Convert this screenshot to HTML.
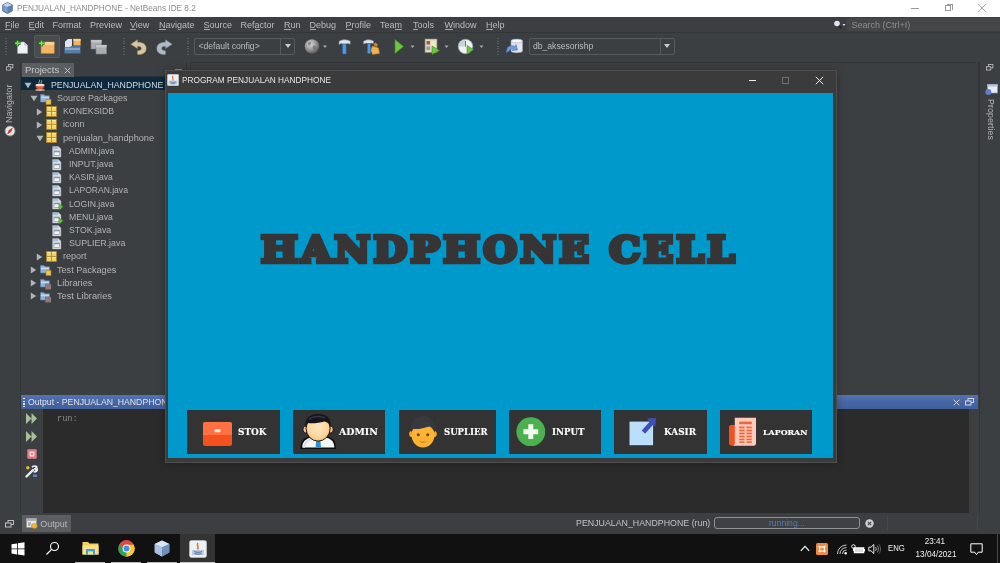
<!DOCTYPE html>
<html><head><meta charset="utf-8"><title>PENJUALAN_HANDPHONE - NetBeans IDE 8.2</title>
<style>
*{box-sizing:border-box;margin:0;padding:0}
html,body{width:1000px;height:563px;overflow:hidden;background:#3c3f41}
body{position:relative;font-family:"Liberation Sans",sans-serif;font-size:8.8px;color:#bbbbbb;line-height:1}
#w{position:absolute;left:0;top:0;width:1000px;height:563px;overflow:hidden;will-change:transform}
.a{position:absolute}
.t{position:absolute;white-space:nowrap}
#titlebar{left:0;top:0;width:1000px;height:17px;background:#fff}
#menubar{left:0;top:17px;width:1000px;height:15px;background:#3c3f41}
#menubar span{position:absolute;top:3.8px;font-size:9px;color:#bbbbbb;white-space:nowrap}
#menubar u{text-decoration:underline;text-underline-offset:1px}
#toolbar{left:0;top:32px;width:1000px;height:30px;background:#3c3f41;border-top:1px solid #333638}
.combo{position:absolute;border:1px solid #555a5c;border-radius:2px;background:#3c3f41;color:#bbb;font-size:8.6px}
.combo .arr{position:absolute;right:0;top:0;bottom:0;width:14px;border-left:1px solid #555a5c}
.combo .arr:after{content:"";position:absolute;left:3.5px;top:5.5px;border:3px solid transparent;border-top:4px solid #ccc;border-bottom:0}
.row{position:absolute;left:21px;width:143px;height:13.2px}
.row span{position:absolute;top:2.2px;font-size:8.9px;color:#b2b2b2;white-space:nowrap}
.bl{font-family:'DejaVu Serif','Liberation Serif',serif;font-weight:bold;font-size:9.6px;color:#fff;transform-origin:0 0;-webkit-text-stroke:0.15px #fff}
</style></head>
<body>
<div id="w">
<!-- TITLE BAR -->
<div class="a" id="titlebar">
  <svg class="a" style="left:2.3px;top:2px" width="11" height="12" viewBox="0 0 11 12"><path d="M5.5 0.5 L10.3 2.8 L10.3 9 L5.5 11.6 L0.7 9 L0.7 2.8Z" fill="#7f9cc4" stroke="#3f5f8f" stroke-width="0.8"/><path d="M0.9 2.9 L5.5 5 L10.1 2.9 L5.5 0.8Z" fill="#c6d6ea"/><path d="M5.5 5 L5.5 11.3 L10.1 8.9 L10.1 2.9Z" fill="#5f7fae"/></svg>
  <div class="t" style="left:17px;top:3.6px;font-size:9.3px;color:#8c8c8c;transform-origin:0 0;transform:scaleX(0.885)">PENJUALAN_HANDPHONE - NetBeans IDE 8.2</div>
  <div class="a" style="left:911px;top:7.5px;width:8px;height:1px;background:#999"></div>
  <div class="a" style="left:944.5px;top:5px;width:6px;height:6px;border:1px solid #999"></div>
  <div class="a" style="left:946.5px;top:3.5px;width:6px;height:6px;border:1px solid #999;border-left:0;border-bottom:0"></div>
  <svg class="a" style="left:977px;top:3px" width="10" height="10" viewBox="0 0 10 10"><path d="M1 1 L9 9 M9 1 L1 9" stroke="#999" stroke-width="0.9" fill="none"/></svg>
</div>
<!-- MENU BAR -->
<div class="a" id="menubar">
  <span style="left:5px">File</span>
  <span style="left:28.5px">Edit</span>
  <span style="left:52.5px">Format</span>
  <span style="left:90px">Preview</span>
  <span style="left:130px">View</span>
  <span style="left:159px">Navigate</span>
  <span style="left:203.5px">Source</span>
  <span style="left:240.5px">Refactor</span>
  <span style="left:284px">Run</span>
  <span style="left:309.5px">Debug</span>
  <span style="left:345.5px">Profile</span>
  <span style="left:380px">Team</span>
  <span style="left:413px">Tools</span>
  <span style="left:444.5px">Window</span>
  <span style="left:486px">Help</span>
  <div class="a" style="left:5.0px;top:12.4px;width:5.5px;height:0.8px;background:#a8a8a8"></div>
  <div class="a" style="left:28.5px;top:12.4px;width:6.0px;height:0.8px;background:#a8a8a8"></div>
  <div class="a" style="left:130.0px;top:12.4px;width:5.8px;height:0.8px;background:#a8a8a8"></div>
  <div class="a" style="left:159.0px;top:12.4px;width:6.5px;height:0.8px;background:#a8a8a8"></div>
  <div class="a" style="left:203.5px;top:12.4px;width:6.0px;height:0.8px;background:#a8a8a8"></div>
  <div class="a" style="left:254.5px;top:12.4px;width:5.0px;height:0.8px;background:#a8a8a8"></div>
  <div class="a" style="left:284.0px;top:12.4px;width:6.5px;height:0.8px;background:#a8a8a8"></div>
  <div class="a" style="left:309.5px;top:12.4px;width:6.5px;height:0.8px;background:#a8a8a8"></div>
  <div class="a" style="left:345.5px;top:12.4px;width:6.0px;height:0.8px;background:#a8a8a8"></div>
  <div class="a" style="left:394.5px;top:12.4px;width:7.5px;height:0.8px;background:#a8a8a8"></div>
  <div class="a" style="left:413.0px;top:12.4px;width:4.5px;height:0.8px;background:#a8a8a8"></div>
  <div class="a" style="left:444.5px;top:12.4px;width:8.5px;height:0.8px;background:#a8a8a8"></div>
  <div class="a" style="left:486.0px;top:12.4px;width:6.5px;height:0.8px;background:#a8a8a8"></div>
  <div class="a" style="left:847px;top:1px;width:153px;height:13px;background:#434748"></div>
  <span style="left:851.5px;color:#8f8f8f">Search (Ctrl+I)</span>
  <svg class="a" style="left:832px;top:2px" width="16" height="12" viewBox="0 0 16 12"><circle cx="5" cy="4.5" r="2.8" fill="#dfe6ee"/><path d="M7 6.8 L9.5 9.5" stroke="#222" stroke-width="1.6"/><path d="M10.5 5 L13.5 5 L12 7Z" fill="#ddd"/></svg>
</div>
<!-- TOOLBAR -->
<div class="a" id="toolbar"></div>
<!-- placeholder sections follow -->
<!-- toolbar icons -->
<div class="a" id="tbicons" style="left:0;top:32px;width:1000px;height:30px">
  <!-- grip -->
  <div class="a" style="left:5px;top:6px;width:2px;height:18px;background:repeating-linear-gradient(#5a5e60 0 1px,transparent 1px 2.6px)"></div>
  <!-- new file -->
  <svg class="a" style="left:13.6px;top:6.6px" width="15" height="15.6" viewBox="0 0 17 17"><path d="M4 3 L11.5 3 L15.5 7 L15.5 16 L4 16Z" fill="#eef1f6" stroke="#9aa3b0" stroke-width="0.6"/><path d="M11.5 3 L11.5 7 L15.5 7Z" fill="#c2c9d4"/><path d="M4 1 L4 8 M0.5 4.5 L7.5 4.5" stroke="#1c6b12" stroke-width="3.2"/><path d="M4 1.6 L4 7.4 M1.1 4.5 L6.9 4.5" stroke="#7fe05a" stroke-width="1.6"/></svg>
  <!-- new project (hover) -->
  <div class="a" style="left:34.4px;top:3px;width:25.4px;height:23px;background:#484c4e;border:1px solid #565a5c;border-radius:2px"></div>
  <svg class="a" style="left:37.6px;top:6.6px" width="17.5" height="15.6" viewBox="0 0 20 17"><rect x="3.5" y="3" width="15" height="13" fill="#f3b463" stroke="#c98a3a" stroke-width="0.6"/><rect x="3.5" y="3" width="15" height="3.4" fill="#f8cf8f"/><path d="M4 1 L4 8 M0.5 4.5 L7.5 4.5" stroke="#1c6b12" stroke-width="3.2"/><path d="M4 1.6 L4 7.4 M1.1 4.5 L6.9 4.5" stroke="#7fe05a" stroke-width="1.6"/></svg>
  <!-- open project -->
  <svg class="a" style="left:64px;top:6px" width="18" height="17" viewBox="0 0 18 17"><path d="M1 3.5 L4 1 L8 1 L8 12 L1 12Z" fill="#dfe5ee"/><rect x="9.5" y="1" width="7" height="6.5" fill="#f3b463" stroke="#c98a3a" stroke-width="0.5"/><rect x="9.5" y="1" width="7" height="2" fill="#f8cf8f"/><path d="M0.5 9.5 L6 9.5 L7.5 8 L16.5 8 L16.5 15.5 L0.5 15.5Z" fill="#5b7ea6" stroke="#3d5b80" stroke-width="0.5"/><rect x="1" y="10" width="15" height="2" fill="#86a6c9"/></svg>
  <!-- close/all -->
  <svg class="a" style="left:90px;top:7px" width="18" height="16" viewBox="0 0 18 16"><rect x="1" y="1" width="10.5" height="9" fill="#a9adb0" stroke="#7b7f82" stroke-width="0.6"/><rect x="1" y="1" width="10.5" height="2.4" fill="#c3c6c9"/><rect x="6" y="6" width="10.5" height="9" fill="#a9adb0" stroke="#7b7f82" stroke-width="0.6"/><rect x="6" y="6" width="10.5" height="2.4" fill="#c3c6c9"/></svg>
  <!-- grip -->
  <div class="a" style="left:122.5px;top:6px;width:2px;height:18px;background:repeating-linear-gradient(#5a5e60 0 1px,transparent 1px 2.6px)"></div>
  <!-- undo -->
  <svg class="a" style="left:129.5px;top:6.5px" width="17" height="16" viewBox="0 0 17 16"><path d="M7.5 0.8 L0.8 5.2 L7.5 9.6 L7.5 7.2 C10.2 7 11.4 8 11.3 9.6 C11.2 11.2 9.8 11.8 7.5 11.7 L7.5 15.6 C12.8 15.8 16.2 13.6 16.2 9.4 C16.2 5.2 12.6 3 7.5 3.2Z" fill="#d9c5a2" stroke="#a08a64" stroke-width="0.5"/></svg>
  <!-- redo -->
  <svg class="a" style="left:155.5px;top:6.5px" width="17" height="16" viewBox="0 0 17 16"><g transform="translate(17,0) scale(-1,1)"><path d="M7.5 0.8 L0.8 5.2 L7.5 9.6 L7.5 7.2 C10.2 7 11.4 8 11.3 9.6 C11.2 11.2 9.8 11.8 7.5 11.7 L7.5 15.6 C12.8 15.8 16.2 13.6 16.2 9.4 C16.2 5.2 12.6 3 7.5 3.2Z" fill="#aebbc7" stroke="#7a8793" stroke-width="0.5"/></g></svg>
  <div class="a" style="left:187px;top:6px;width:2px;height:18px;background:repeating-linear-gradient(#5a5e60 0 1px,transparent 1px 2.6px)"></div>
  <!-- combo -->
  <div class="combo" style="left:194px;top:5.5px;width:101px;height:17px"><span class="t" style="left:3.5px;top:3.2px">&lt;default config&gt;</span><div class="arr"></div></div>
  <!-- globe -->
  <svg class="a" style="left:304px;top:6px" width="24" height="17" viewBox="0 0 24 17"><defs><radialGradient id="gl" cx="0.4" cy="0.35" r="0.7"><stop offset="0" stop-color="#d9d9d9"/><stop offset="0.6" stop-color="#8d8d8d"/><stop offset="1" stop-color="#4d4d4d"/></radialGradient></defs><circle cx="8" cy="8.5" r="7.3" fill="url(#gl)"/><path d="M4 5 C6 3 8 4 7 6 C6 8 4 8 4 5Z M9 8 C12 7 13 9 12 11 C10 13 8 11 9 8Z" fill="#6d6d6d" opacity="0.7"/><path d="M19 7.5 L23 7.5 L21 10Z" fill="#a8a8a8"/></svg>
  <!-- hammer -->
  <svg class="a" style="left:336px;top:6px" width="17" height="17" viewBox="0 0 17 17"><path d="M3 3.6 C5 1.4 10.5 1.2 14.2 3.2 L14.2 6.2 L11 5.2 L10.2 6.2 L6.6 6.2 L5.8 5.2 L3 6.4Z" fill="#dfe5ec" stroke="#7e8b99" stroke-width="0.6"/><path d="M6.7 6 L10 6 L10.3 15.5 C9.5 16.3 7.3 16.3 6.4 15.5Z" fill="#4f9be0" stroke="#2a66a6" stroke-width="0.6"/></svg>
  <!-- clean & build -->
  <svg class="a" style="left:362px;top:6px" width="19" height="17" viewBox="0 0 19 17"><path d="M1.5 3.6 C3.5 1.4 8.5 1.2 11.5 3.2 L11.5 5.6 L9 4.9 L8.5 5.6 L5.5 5.6 L4.8 4.9 L1.5 6Z" fill="#dfe5ec" stroke="#7e8b99" stroke-width="0.6"/><path d="M5.6 5.6 L8.4 5.6 L8.7 15 C8 15.8 6.2 15.8 5.4 15Z" fill="#4f9be0" stroke="#2a66a6" stroke-width="0.6"/><path d="M13 4.5 L16 6.5 L14.5 9 L11.5 7Z" fill="#c9872e"/><path d="M10.5 8 L16.5 10 L17.5 15.5 L10.5 16.5 L8.8 12Z" fill="#f0b154" stroke="#b77a22" stroke-width="0.6"/></svg>
  <!-- run -->
  <svg class="a" style="left:392px;top:6px" width="26" height="17" viewBox="0 0 26 17"><path d="M3 1.5 L11.5 8.5 L3 15.5Z" fill="#6cc644" stroke="#3d8f1f" stroke-width="0.6"/><path d="M18.5 7.5 L22.5 7.5 L20.5 10Z" fill="#a8a8a8"/></svg>
  <!-- debug -->
  <svg class="a" style="left:424px;top:6px" width="30" height="17" viewBox="0 0 30 17"><rect x="1" y="1" width="12" height="13.5" fill="#ddd9c8" stroke="#8b8876" stroke-width="0.6"/><rect x="2.5" y="3" width="3.5" height="3.5" fill="#c0503a"/><rect x="2.5" y="8.5" width="3.5" height="3.5" fill="#9a9a9a"/><rect x="7.5" y="3" width="4" height="9" fill="#f2e8c4"/><path d="M8 8 L15.5 12.5 L8 16.5Z" fill="#6cc644" stroke="#3d8f1f" stroke-width="0.6"/><path d="M20.5 7.5 L24.5 7.5 L22.5 10Z" fill="#a8a8a8"/></svg>
  <!-- profile -->
  <svg class="a" style="left:457px;top:6px" width="30" height="17" viewBox="0 0 30 17"><circle cx="8.5" cy="8.5" r="7.3" fill="#eef2f5" stroke="#8b979f" stroke-width="0.7"/><path d="M8.5 8.5 L8.5 1.8 A6.7 6.7 0 0 0 1.8 8.5Z" fill="#c9d3da"/><path d="M8.5 3 L8.5 8.5" stroke="#b33" stroke-width="0.8"/><path d="M10 7.5 L16.5 11.5 L10 15.8Z" fill="#6cc644" stroke="#3d8f1f" stroke-width="0.6"/><path d="M22.5 7.5 L26.5 7.5 L24.5 10Z" fill="#a8a8a8"/></svg>
  <!-- grip -->
  <div class="a" style="left:497px;top:6px;width:2px;height:18px;background:repeating-linear-gradient(#5a5e60 0 1px,transparent 1px 2.6px)"></div>
  <!-- db icon -->
  <svg class="a" style="left:505px;top:6px" width="19" height="17" viewBox="0 0 19 17"><path d="M6 3 C6 0.8 17.5 0.8 17.5 3 L17.5 13 C17.5 15.3 6 15.3 6 13Z" fill="#e3e7ec" stroke="#9aa3ad" stroke-width="0.6"/><ellipse cx="11.75" cy="3" rx="5.75" ry="1.8" fill="#f6f8fa" stroke="#9aa3ad" stroke-width="0.5"/><path d="M1 14.5 L2.5 9.5 C4 7.5 8 7 10 8.5 L11 6.5 L12.5 12 L7 12.5 L8.3 11 C6.5 10.5 4.5 11.5 3.8 13.5Z" fill="#6d9be0" stroke="#3d66ad" stroke-width="0.5"/></svg>
  <div class="combo" style="left:528.5px;top:5.5px;width:146px;height:17px"><span class="t" style="left:3.5px;top:3.2px">db_aksesorishp</span><div class="arr"></div></div>
</div>
<!-- MAIN AREA -->
<div class="a" style="left:0;top:62px;width:1000px;height:451px;background:#3c3f41"></div>
<!-- left side bar -->
<svg class="a" style="left:5.8px;top:64px" width="8" height="7" viewBox="0 0 11 9"><rect x="3.5" y="0.5" width="6" height="4.5" fill="none" stroke="#ccc" stroke-width="1"/><rect x="0.5" y="3.5" width="6" height="4.5" fill="#3c3f41" stroke="#ccc" stroke-width="1"/></svg>
<div class="t" style="left:5.2px;top:123px;font-size:8.8px;color:#b4b4b4;transform:rotate(-90deg);transform-origin:0 0;letter-spacing:0.1px">Navigator</div>
<svg class="a" style="left:4px;top:125px" width="12" height="12" viewBox="0 0 12 12"><circle cx="6" cy="6" r="5" fill="#e8e8e8" stroke="#888" stroke-width="0.8"/><path d="M6 1.5 L7.5 6 L6 10.5 L4.5 6Z" fill="#c33" transform="rotate(40 6 6)"/></svg>
<!-- projects panel -->
<div class="a" style="left:20px;top:62px;width:1px;height:451px;background:#323537"></div>
<div class="a" style="left:21px;top:62px;width:165px;height:15px;background:#3c3f41;border-bottom:1px solid #2f3234"></div>
<div class="a" style="left:21.5px;top:62.5px;width:52.5px;height:14.5px;background:#5a5e60"></div>
<div class="t" style="left:24.5px;top:66px;font-size:9px;color:#c8c8c8;transform-origin:0 0;transform:scaleX(1.05)">Projects</div>
<svg class="a" style="left:63.5px;top:66.5px" width="7" height="7" viewBox="0 0 7 7"><path d="M0.7 0.7 L6.3 6.3 M6.3 0.7 L0.7 6.3" stroke="#ccc" stroke-width="0.9"/></svg>
<div class="a" style="left:174.5px;top:68.6px;width:7.5px;height:1.4px;background:#8a8a8a"></div>
<div class="a" style="left:21px;top:77px;width:143px;height:318px;background:#3c3f41"></div>
<div class="a" style="left:21px;top:76.8px;width:143.5px;height:13.7px;background:#0d293e"></div>
<div class="row" style="top:78.6px"><svg class="a" style="left:2.8px;top:3.5px" width="8" height="7" viewBox="0 0 8 7"><path d="M0.5 0.8 L7.5 0.8 L4 6.2Z" fill="#b4b4b4"/></svg><svg class="a" style="left:13.0px;top:0.5px" width="12" height="12" viewBox="0 0 12 12"><path d="M1.5 6 L10.5 6 C10.5 9 9 10.5 6 10.5 C3 10.5 1.5 9 1.5 6Z" fill="#d9603a" stroke="#8e3318" stroke-width="0.6"/><ellipse cx="6" cy="6" rx="4.5" ry="1.3" fill="#f1e3d3"/><path d="M5 4.5 C4 3 6.5 2.5 5.5 0.8 M7.3 4.5 C6.5 3.3 8.3 2.8 7.6 1.5" stroke="#e8d8c8" stroke-width="0.8" fill="none"/><ellipse cx="6" cy="11" rx="4.8" ry="0.9" fill="#b9b2a8"/></svg><span id="tr0" style="left:30.0px;transform-origin:0 0;transform:scaleX(0.986);color:#d0d8e2">PENJUALAN_HANDPHONE</span></div>
<div class="row" style="top:91.8px"><svg class="a" style="left:8.8px;top:3.5px" width="8" height="7" viewBox="0 0 8 7"><path d="M0.5 0.8 L7.5 0.8 L4 6.2Z" fill="#b4b4b4"/></svg><svg class="a" style="left:19.0px;top:1px" width="12" height="12" viewBox="0 0 12 12"><path d="M0.5 1.5 L4 1.5 L5 2.8 L9.5 2.8 L9.5 9 L0.5 9Z" fill="#8fb4d9" stroke="#5f84a8" stroke-width="0.6"/><rect x="1" y="3.6" width="8" height="1.6" fill="#c4d9ee"/><rect x="6" y="6.5" width="5" height="5" fill="#e9c556" stroke="#a8851f" stroke-width="0.6"/></svg><span id="tr1" style="left:36.0px;transform-origin:0 0;transform:scaleX(1.012)">Source Packages</span></div>
<div class="row" style="top:105.0px"><svg class="a" style="left:15.3px;top:2.5px" width="7" height="8" viewBox="0 0 7 8"><path d="M0.8 0.5 L0.8 7.5 L6.2 4Z" fill="#b4b4b4"/></svg><svg class="a" style="left:25.0px;top:1px" width="11" height="11" viewBox="0 0 11 11"><rect x="0.5" y="0.5" width="10" height="10" fill="#f3d169" stroke="#a9802a" stroke-width="0.8"/><path d="M0.8 5.5 L10.2 5.5 M5.5 0.8 L5.5 10.2" stroke="#b08a35" stroke-width="0.9"/><path d="M1.4 1.6 L4.6 1.6 M6.4 1.6 L9.6 1.6 M1.4 6.6 L4.6 6.6 M6.4 6.6 L9.6 6.6" stroke="#fdf0b8" stroke-width="0.8"/></svg><span id="tr2" style="left:42.0px;transform-origin:0 0;transform:scaleX(0.987)">KONEKSIDB</span></div>
<div class="row" style="top:118.2px"><svg class="a" style="left:15.3px;top:2.5px" width="7" height="8" viewBox="0 0 7 8"><path d="M0.8 0.5 L0.8 7.5 L6.2 4Z" fill="#b4b4b4"/></svg><svg class="a" style="left:25.0px;top:1px" width="11" height="11" viewBox="0 0 11 11"><rect x="0.5" y="0.5" width="10" height="10" fill="#f3d169" stroke="#a9802a" stroke-width="0.8"/><path d="M0.8 5.5 L10.2 5.5 M5.5 0.8 L5.5 10.2" stroke="#b08a35" stroke-width="0.9"/><path d="M1.4 1.6 L4.6 1.6 M6.4 1.6 L9.6 1.6 M1.4 6.6 L4.6 6.6 M6.4 6.6 L9.6 6.6" stroke="#fdf0b8" stroke-width="0.8"/></svg><span id="tr3" style="left:42.0px;transform-origin:0 0;transform:scaleX(1.009)">iconn</span></div>
<div class="row" style="top:131.4px"><svg class="a" style="left:14.8px;top:3.5px" width="8" height="7" viewBox="0 0 8 7"><path d="M0.5 0.8 L7.5 0.8 L4 6.2Z" fill="#b4b4b4"/></svg><svg class="a" style="left:25.0px;top:1px" width="11" height="11" viewBox="0 0 11 11"><rect x="0.5" y="0.5" width="10" height="10" fill="#f3d169" stroke="#a9802a" stroke-width="0.8"/><path d="M0.8 5.5 L10.2 5.5 M5.5 0.8 L5.5 10.2" stroke="#b08a35" stroke-width="0.9"/><path d="M1.4 1.6 L4.6 1.6 M6.4 1.6 L9.6 1.6 M1.4 6.6 L4.6 6.6 M6.4 6.6 L9.6 6.6" stroke="#fdf0b8" stroke-width="0.8"/></svg><span id="tr4" style="left:42.0px;transform-origin:0 0;transform:scaleX(1.037)">penjualan_handphone</span></div>
<div class="row" style="top:144.6px"><svg class="a" style="left:31.0px;top:1px" width="10" height="12" viewBox="0 0 10 12"><path d="M0.6 0.6 L6.4 0.6 L8.9 3 L8.9 11 L0.6 11Z" fill="#dde3ea" stroke="#aab3bd" stroke-width="0.5"/><rect x="1" y="1" width="5.2" height="2.2" fill="#a7bfda"/><rect x="2" y="5" width="5.6" height="4.4" fill="#f4f6f8" stroke="#8b97a5" stroke-width="0.7"/><rect x="2" y="5" width="5.6" height="1.3" fill="#8b97a5"/></svg><span id="tr5" style="left:47.5px;transform-origin:0 0;transform:scaleX(0.955)">ADMIN.java</span></div>
<div class="row" style="top:157.8px"><svg class="a" style="left:31.0px;top:1px" width="10" height="12" viewBox="0 0 10 12"><path d="M0.6 0.6 L6.4 0.6 L8.9 3 L8.9 11 L0.6 11Z" fill="#dde3ea" stroke="#aab3bd" stroke-width="0.5"/><rect x="1" y="1" width="5.2" height="2.2" fill="#a7bfda"/><rect x="2" y="5" width="5.6" height="4.4" fill="#f4f6f8" stroke="#8b97a5" stroke-width="0.7"/><rect x="2" y="5" width="5.6" height="1.3" fill="#8b97a5"/></svg><span id="tr6" style="left:47.5px;transform-origin:0 0;transform:scaleX(0.998)">INPUT.java</span></div>
<div class="row" style="top:171.0px"><svg class="a" style="left:31.0px;top:1px" width="10" height="12" viewBox="0 0 10 12"><path d="M0.6 0.6 L6.4 0.6 L8.9 3 L8.9 11 L0.6 11Z" fill="#dde3ea" stroke="#aab3bd" stroke-width="0.5"/><rect x="1" y="1" width="5.2" height="2.2" fill="#a7bfda"/><rect x="2" y="5" width="5.6" height="4.4" fill="#f4f6f8" stroke="#8b97a5" stroke-width="0.7"/><rect x="2" y="5" width="5.6" height="1.3" fill="#8b97a5"/></svg><span id="tr7" style="left:47.5px;transform-origin:0 0;transform:scaleX(0.965)">KASIR.java</span></div>
<div class="row" style="top:184.2px"><svg class="a" style="left:31.0px;top:1px" width="10" height="12" viewBox="0 0 10 12"><path d="M0.6 0.6 L6.4 0.6 L8.9 3 L8.9 11 L0.6 11Z" fill="#dde3ea" stroke="#aab3bd" stroke-width="0.5"/><rect x="1" y="1" width="5.2" height="2.2" fill="#a7bfda"/><rect x="2" y="5" width="5.6" height="4.4" fill="#f4f6f8" stroke="#8b97a5" stroke-width="0.7"/><rect x="2" y="5" width="5.6" height="1.3" fill="#8b97a5"/></svg><span id="tr8" style="left:47.5px;transform-origin:0 0;transform:scaleX(0.963)">LAPORAN.java</span></div>
<div class="row" style="top:197.4px"><svg class="a" style="left:31.0px;top:1px" width="12" height="12" viewBox="0 0 12 12"><path d="M0.6 0.6 L6.4 0.6 L8.9 3 L8.9 11 L0.6 11Z" fill="#dde3ea" stroke="#aab3bd" stroke-width="0.5"/><rect x="1" y="1" width="5.2" height="2.2" fill="#a7bfda"/><rect x="2" y="5" width="5.6" height="4.4" fill="#f4f6f8" stroke="#8b97a5" stroke-width="0.7"/><rect x="2" y="5" width="5.6" height="1.3" fill="#8b97a5"/><path d="M6.8 6 L11.4 8.7 L6.8 11.4Z" fill="#5fc23a" stroke="#2f8f12" stroke-width="0.4"/></svg><span id="tr9" style="left:47.5px;transform-origin:0 0;transform:scaleX(0.975)">LOGIN.java</span></div>
<div class="row" style="top:210.6px"><svg class="a" style="left:31.0px;top:1px" width="12" height="12" viewBox="0 0 12 12"><path d="M0.6 0.6 L6.4 0.6 L8.9 3 L8.9 11 L0.6 11Z" fill="#dde3ea" stroke="#aab3bd" stroke-width="0.5"/><rect x="1" y="1" width="5.2" height="2.2" fill="#a7bfda"/><rect x="2" y="5" width="5.6" height="4.4" fill="#f4f6f8" stroke="#8b97a5" stroke-width="0.7"/><rect x="2" y="5" width="5.6" height="1.3" fill="#8b97a5"/><path d="M6.8 6 L11.4 8.7 L6.8 11.4Z" fill="#5fc23a" stroke="#2f8f12" stroke-width="0.4"/></svg><span id="tr10" style="left:47.5px;transform-origin:0 0;transform:scaleX(0.976)">MENU.java</span></div>
<div class="row" style="top:223.8px"><svg class="a" style="left:31.0px;top:1px" width="10" height="12" viewBox="0 0 10 12"><path d="M0.6 0.6 L6.4 0.6 L8.9 3 L8.9 11 L0.6 11Z" fill="#dde3ea" stroke="#aab3bd" stroke-width="0.5"/><rect x="1" y="1" width="5.2" height="2.2" fill="#a7bfda"/><rect x="2" y="5" width="5.6" height="4.4" fill="#f4f6f8" stroke="#8b97a5" stroke-width="0.7"/><rect x="2" y="5" width="5.6" height="1.3" fill="#8b97a5"/></svg><span id="tr11" style="left:47.5px;transform-origin:0 0;transform:scaleX(0.985)">STOK.java</span></div>
<div class="row" style="top:237.0px"><svg class="a" style="left:31.0px;top:1px" width="10" height="12" viewBox="0 0 10 12"><path d="M0.6 0.6 L6.4 0.6 L8.9 3 L8.9 11 L0.6 11Z" fill="#dde3ea" stroke="#aab3bd" stroke-width="0.5"/><rect x="1" y="1" width="5.2" height="2.2" fill="#a7bfda"/><rect x="2" y="5" width="5.6" height="4.4" fill="#f4f6f8" stroke="#8b97a5" stroke-width="0.7"/><rect x="2" y="5" width="5.6" height="1.3" fill="#8b97a5"/></svg><span id="tr12" style="left:47.5px;transform-origin:0 0;transform:scaleX(0.992)">SUPLIER.java</span></div>
<div class="row" style="top:250.2px"><svg class="a" style="left:15.3px;top:2.5px" width="7" height="8" viewBox="0 0 7 8"><path d="M0.8 0.5 L0.8 7.5 L6.2 4Z" fill="#b4b4b4"/></svg><svg class="a" style="left:25.0px;top:1px" width="11" height="11" viewBox="0 0 11 11"><rect x="0.5" y="0.5" width="10" height="10" fill="#f3d169" stroke="#a9802a" stroke-width="0.8"/><path d="M0.8 5.5 L10.2 5.5 M5.5 0.8 L5.5 10.2" stroke="#b08a35" stroke-width="0.9"/><path d="M1.4 1.6 L4.6 1.6 M6.4 1.6 L9.6 1.6 M1.4 6.6 L4.6 6.6 M6.4 6.6 L9.6 6.6" stroke="#fdf0b8" stroke-width="0.8"/></svg><span id="tr13" style="left:42.0px;transform-origin:0 0;transform:scaleX(1.018)">report</span></div>
<div class="row" style="top:263.4px"><svg class="a" style="left:9.3px;top:2.5px" width="7" height="8" viewBox="0 0 7 8"><path d="M0.8 0.5 L0.8 7.5 L6.2 4Z" fill="#b4b4b4"/></svg><svg class="a" style="left:19.0px;top:1px" width="12" height="12" viewBox="0 0 12 12"><path d="M0.5 1.5 L4 1.5 L5 2.8 L9.5 2.8 L9.5 9 L0.5 9Z" fill="#8fb4d9" stroke="#5f84a8" stroke-width="0.6"/><rect x="1" y="3.6" width="8" height="1.6" fill="#c4d9ee"/><rect x="6" y="6.5" width="5" height="5" fill="#e9c556" stroke="#a8851f" stroke-width="0.6"/></svg><span id="tr14" style="left:36.0px;transform-origin:0 0;transform:scaleX(1.027)">Test Packages</span></div>
<div class="row" style="top:276.6px"><svg class="a" style="left:9.3px;top:2.5px" width="7" height="8" viewBox="0 0 7 8"><path d="M0.8 0.5 L0.8 7.5 L6.2 4Z" fill="#b4b4b4"/></svg><svg class="a" style="left:19.0px;top:1px" width="12" height="12" viewBox="0 0 12 12"><path d="M0.5 1.5 L4 1.5 L5 2.8 L9.5 2.8 L9.5 9 L0.5 9Z" fill="#8fb4d9" stroke="#5f84a8" stroke-width="0.6"/><rect x="1" y="3.6" width="8" height="1.6" fill="#c4d9ee"/><rect x="5.5" y="6" width="5.5" height="5.5" fill="#8a8f96" stroke="#555" stroke-width="0.5"/><path d="M6.5 7.5 L10 7.5 M6.5 9 L10 9 M6.5 10.3 L10 10.3" stroke="#c0503a" stroke-width="0.7"/></svg><span id="tr15" style="left:36.0px;transform-origin:0 0;transform:scaleX(1.04)">Libraries</span></div>
<div class="row" style="top:289.8px"><svg class="a" style="left:9.3px;top:2.5px" width="7" height="8" viewBox="0 0 7 8"><path d="M0.8 0.5 L0.8 7.5 L6.2 4Z" fill="#b4b4b4"/></svg><svg class="a" style="left:19.0px;top:1px" width="12" height="12" viewBox="0 0 12 12"><path d="M0.5 1.5 L4 1.5 L5 2.8 L9.5 2.8 L9.5 9 L0.5 9Z" fill="#8fb4d9" stroke="#5f84a8" stroke-width="0.6"/><rect x="1" y="3.6" width="8" height="1.6" fill="#c4d9ee"/><rect x="5.5" y="6" width="5.5" height="5.5" fill="#8a8f96" stroke="#555" stroke-width="0.5"/><path d="M6.5 7.5 L10 7.5 M6.5 9 L10 9 M6.5 10.3 L10 10.3" stroke="#c0503a" stroke-width="0.7"/></svg><span id="tr16" style="left:36.0px;transform-origin:0 0;transform:scaleX(1.04)">Test Libraries</span></div>

<!-- editor area border -->
<div class="a" style="left:189.5px;top:62px;width:789.5px;height:333px;border:1px solid #333638;border-bottom:0;background:#3c3f41"></div>
<div class="a" style="left:186px;top:62px;width:1px;height:333px;background:#333638"></div>
<!-- right sidebar -->
<div class="a" style="left:979px;top:62px;width:1px;height:451px;background:#333638"></div>
<svg class="a" style="left:986.3px;top:64px" width="8" height="7" viewBox="0 0 11 9"><rect x="3.5" y="0.5" width="6" height="4.5" fill="none" stroke="#ccc" stroke-width="1"/><rect x="0.5" y="3.5" width="6" height="4.5" fill="#3c3f41" stroke="#ccc" stroke-width="1"/></svg>
<svg class="a" style="left:984.5px;top:84px" width="13" height="12" viewBox="0 0 13 12"><rect x="2.5" y="0.5" width="10" height="8.5" fill="#e8ecf2" stroke="#8a9ab5" stroke-width="0.6"/><rect x="2.5" y="0.5" width="10" height="2.2" fill="#b7c6df"/><circle cx="3.3" cy="8" r="3" fill="#5f7fc4"/></svg>
<div class="t" style="left:994.6px;top:99px;font-size:8.8px;color:#b4b4b4;transform:rotate(90deg);transform-origin:0 0;letter-spacing:0.1px">Properties</div>

<!-- OUTPUT PANEL -->
<div class="a" style="left:21px;top:394.5px;width:957px;height:14.5px;background:linear-gradient(#5473b0,#4666a5 50%,#40609c)"></div>
<div class="a" style="left:23px;top:397.5px;width:2px;height:9px;background:repeating-linear-gradient(#e6e6e6 0 1.3px,transparent 1.3px 2.6px)"></div>
<div class="t" style="left:27.8px;top:398.4px;font-size:9px;color:#dfe2e8;transform-origin:0 0;transform:scaleX(0.965)">Output - PENJUALAN_HANDPHONE (run)</div>
<svg class="a" style="left:952.5px;top:398.5px" width="7" height="7" viewBox="0 0 7 7"><path d="M0.7 0.7 L6.3 6.3 M6.3 0.7 L0.7 6.3" stroke="#dfe4ee" stroke-width="0.9"/></svg>
<svg class="a" style="left:965px;top:398px" width="9" height="8" viewBox="0 0 9 8"><rect x="3" y="0.5" width="5.5" height="4" fill="none" stroke="#dfe4ee" stroke-width="0.9"/><rect x="0.5" y="3" width="5.5" height="4" fill="#4666a5" stroke="#dfe4ee" stroke-width="0.9"/></svg>
<div class="a" style="left:21px;top:409px;width:22px;height:104px;background:#3c3f41"></div>
<div class="a" style="left:43px;top:409px;width:926px;height:104px;background:#2b2b2b"></div>
<div class="a" style="left:969px;top:409px;width:10px;height:104px;background:#3c3f41"></div>
<div class="t" style="left:57px;top:414.5px;font-family:'Liberation Mono',monospace;font-size:8.6px;color:#8c8c8c">run:</div>
<svg class="a" style="left:25px;top:411.5px" width="13" height="13" viewBox="0 0 13 13"><path d="M1 1 L6.5 6.5 L1 12Z M6.5 1 L12 6.5 L6.5 12Z" fill="#a9bf9a"/></svg>
<svg class="a" style="left:25px;top:430px" width="13" height="13" viewBox="0 0 13 13"><path d="M1 1 L6.5 6.5 L1 12Z M6.5 1 L12 6.5 L6.5 12Z" fill="#a9bf9a"/></svg>
<svg class="a" style="left:26.5px;top:448.5px" width="10" height="10" viewBox="0 0 10 10"><rect x="0.3" y="0.3" width="9.4" height="9.4" rx="1" fill="#e07f7f"/><rect x="2.6" y="2.6" width="4.8" height="4.8" fill="#f9e6e6"/><rect x="3.8" y="3.8" width="2.4" height="2.4" fill="#e07f7f"/></svg>
<svg class="a" style="left:25px;top:465px" width="13" height="13" viewBox="0 0 13 13"><path d="M1.5 11.5 L8 5" stroke="#e9edf2" stroke-width="2.4" stroke-linecap="round"/><path d="M7 2.2 C8.5 0.5 11 0.8 11.8 2 L9.8 3.6 L10.6 5 L12.4 4 C12.6 6 10.6 7.4 8.6 6.6" fill="none" stroke="#e9edf2" stroke-width="1.6"/><circle cx="2.8" cy="2.8" r="1.7" fill="#e9b43c"/><rect x="8" y="9.5" width="4" height="2.5" fill="#5f83c9"/></svg>

<!-- STATUS BAR -->
<div class="a" style="left:0;top:513px;width:1000px;height:21px;background:#3c3f41"></div>
<svg class="a" style="left:4.5px;top:519.5px" width="9" height="8" viewBox="0 0 9 8"><rect x="3" y="0.5" width="5.5" height="4" fill="none" stroke="#ccc" stroke-width="0.9"/><rect x="0.5" y="3" width="5.5" height="4" fill="#3c3f41" stroke="#ccc" stroke-width="0.9"/></svg>
<div class="a" style="left:22px;top:515.3px;width:49px;height:17px;background:#5a5e60"></div>
<svg class="a" style="left:25.5px;top:518px" width="12" height="11" viewBox="0 0 12 11"><rect x="0.5" y="0.5" width="10" height="9" fill="#e6e8ea" stroke="#8a8d90" stroke-width="0.5"/><rect x="0.5" y="0.5" width="10" height="2.4" fill="#a9adb2"/><path d="M2 5 L5 5 M2 7 L4.5 7" stroke="#555" stroke-width="0.8"/><ellipse cx="8.3" cy="8" rx="3" ry="2.4" fill="#f0b43c" stroke="#b97f12" stroke-width="0.5"/></svg>
<div class="t" style="left:40.3px;top:519.6px;font-size:9px;color:#b8b8b8">Output</div>
<div class="t" id="stattxt" style="left:576px;top:518.8px;font-size:9px;color:#c2c2c2;transform-origin:0 0;transform:scaleX(0.98)">PENJUALAN_HANDPHONE (run)</div>
<div class="a" style="left:714px;top:516.5px;width:145.5px;height:12.5px;border:1px solid #8e9192;border-radius:3px;background:#3f4244"></div>
<div class="t" style="left:768.7px;top:519.2px;font-size:9px;color:#5a79b4;transform-origin:0 0;transform:scaleX(0.955)">running...</div>
<svg class="a" style="left:864.5px;top:518.5px" width="9" height="9" viewBox="0 0 9 9"><circle cx="4.5" cy="4.5" r="4.2" fill="#d0d0d0"/><path d="M2.8 2.8 L6.2 6.2 M6.2 2.8 L2.8 6.2" stroke="#444" stroke-width="1.1"/></svg>
<div class="a" style="left:886.5px;top:516px;width:1px;height:14px;background:#45484a"></div>
<div class="a" style="left:977px;top:516px;width:1px;height:14px;background:#45484a"></div>
<!-- APP WINDOW -->
<div class="a" id="appwin" style="left:164.5px;top:70px;width:672px;height:392.5px;background:#3c3b3b;border:1px solid #4e4e4f;box-shadow:0 1px 8px rgba(0,0,0,0.28)"></div>
<svg class="a" style="left:166.5px;top:73.5px" width="12" height="12" viewBox="0 0 12 12"><rect x="0.3" y="0.3" width="11.4" height="11.4" rx="1.2" fill="#eef1f4" stroke="#b9c0c8" stroke-width="0.5"/><rect x="1.5" y="6.5" width="9" height="4" fill="#b9cbe2"/><path d="M6 1.8 C4.6 3.6 7 4.4 5.6 6.4" stroke="#e0762a" stroke-width="1.2" fill="none"/><path d="M3.3 7.8 C4.8 8.5 7.2 8.5 8.7 7.8 M3.6 9.3 C5 9.9 7 9.9 8.4 9.3" stroke="#4d74a8" stroke-width="0.8" fill="none"/></svg>
<div class="t" style="left:182px;top:75.6px;font-size:8.9px;color:#e8e8e8;transform-origin:0 0;transform:scaleX(0.932)">PROGRAM PENJUALAN HANDPHONE</div>
<div class="a" style="left:748.5px;top:80px;width:7.5px;height:1px;background:#f0f0f0"></div>
<div class="a" style="left:782px;top:76.5px;width:7px;height:7px;border:1px solid #6e6e6e"></div>
<svg class="a" style="left:814.5px;top:75.5px" width="9" height="9" viewBox="0 0 9 9"><path d="M0.8 0.8 L8.2 8.2 M8.2 0.8 L0.8 8.2" stroke="#f0f0f0" stroke-width="1"/></svg>
<div class="a" style="left:168px;top:93px;width:664.5px;height:365px;background:#0099cc"></div>
<div class="t" id="bigtitle" style="left:261px;top:231.3px;font-family:'DejaVu Serif','Liberation Serif',serif;font-weight:bold;font-size:36px;color:#373435;-webkit-text-stroke:4.4px #373435;transform-origin:0 0;transform:scaleX(1.077);letter-spacing:3.2px">HANDPHONE CELL</div>
<!-- buttons -->
<div class="a btn" style="left:187px;top:410px;width:92.5px;height:43.5px;background:#333333"></div>
<div class="a btn" style="left:293px;top:410px;width:92px;height:43.5px;background:#333333"></div>
<div class="a btn" style="left:398.5px;top:410px;width:97px;height:43.5px;background:#333333"></div>
<div class="a btn" style="left:509px;top:410px;width:91.6px;height:43.5px;background:#333333"></div>
<div class="a btn" style="left:614.2px;top:410px;width:92.7px;height:43.5px;background:#333333"></div>
<div class="a btn" style="left:720.2px;top:410px;width:91.7px;height:43.5px;background:#333333"></div>
<!-- STOK icon -->
<svg class="a" style="left:202px;top:419px" width="31" height="28" viewBox="0 0 31 28"><path d="M9 3.8 L9 2.2 Q9 1.2 10 1.2 L21 1.2 Q22 1.2 22 2.2 L22 3.8" fill="none" stroke="#3a2a26" stroke-width="1.2" opacity="0.6"/><rect x="1" y="3" width="29" height="24" rx="2.2" fill="#f4511e"/><path d="M1 16 L1 5.2 Q1 3 3.2 3 L27.8 3 Q30 3 30 5.2 L30 16Z" fill="#ff7043"/><rect x="12.5" y="10.3" width="6" height="3" rx="1" fill="#ffe8cf"/></svg>
<div class="t bl" id="l1" style="left:237.8px;top:426.9px;transform:scaleX(0.93)">STOK</div>
<!-- ADMIN icon -->
<svg class="a" style="left:300px;top:413px" width="37" height="37" viewBox="0 0 37 37"><defs><radialGradient id="fc" cx="0.5" cy="0.45" r="0.6"><stop offset="0" stop-color="#ffe9c4"/><stop offset="0.7" stop-color="#ffd49a"/><stop offset="1" stop-color="#f2b26a"/></radialGradient></defs>
<path d="M1.2 35.2 C1.2 28 6 24.5 12 23.5 L25 23.5 C31 24.5 35.3 28 35.3 35.2Z" fill="#f4f6f8" stroke="#0c0c0c" stroke-width="1.6"/>
<path d="M16.3 26.5 L20.3 26.5 L21 34.6 L15.6 34.6Z" fill="#2f8fd0"/>
<path d="M4 35 C4.5 30 8 27 12 26" fill="none" stroke="#d9dde2" stroke-width="1.5"/>
<ellipse cx="5.6" cy="16.5" rx="2.6" ry="3.4" fill="#f6bf7f" stroke="#0c0c0c" stroke-width="0.8"/><ellipse cx="30.6" cy="16.5" rx="2.6" ry="3.4" fill="#f6bf7f" stroke="#0c0c0c" stroke-width="0.8"/>
<ellipse cx="18.1" cy="15.5" rx="12" ry="12.6" fill="url(#fc)" stroke="#0c0c0c" stroke-width="0.9"/>
<path d="M5.7 14.5 C4 5 10 1 18 1 C26 1 32 5 30.6 14.5 C29.5 11 27.5 9.2 24.5 8.6 C19 10.2 11 10.8 8.5 10 C7 11 6.2 12.6 5.7 14.5Z" fill="#15171c"/>
<path d="M9 6.5 C12 3.2 20 2.6 25 5" fill="none" stroke="#3a4250" stroke-width="1.4" opacity="0.8"/></svg>
<div class="t bl" id="l2" style="left:339px;top:426.9px;transform:scaleX(0.98)">ADMIN</div>
<!-- SUPLIER icon -->
<svg class="a" style="left:408px;top:414px" width="30" height="35" viewBox="0 0 30 35"><ellipse cx="3.4" cy="20" rx="2.2" ry="3" fill="#f9a825"/><ellipse cx="26.6" cy="20" rx="2.2" ry="3" fill="#f9a825"/><ellipse cx="15" cy="20.5" rx="11.6" ry="13" fill="#ffb333"/><path d="M3.4 19 C1.5 8 7 2 15 2 C23 2 28.5 8 26.6 19 C25.5 15.5 24 13.5 21.5 12.4 C17 13.6 9 15.8 5.6 14.8 C4.4 16 3.8 17.2 3.4 19Z" fill="#383840"/><circle cx="10.3" cy="20.8" r="1.5" fill="#7a3f12"/><circle cx="19.7" cy="20.8" r="1.5" fill="#7a3f12"/><path d="M11.5 27.2 C13.5 29 16.5 29 18.5 27.2" fill="#f08a2a" stroke="#e8872a" stroke-width="1"/></svg>
<div class="t bl" id="l3" style="left:443.8px;top:426.9px;transform:scaleX(0.89)">SUPLIER</div>
<!-- INPUT icon -->
<svg class="a" style="left:515px;top:416px" width="32" height="32" viewBox="0 0 32 32"><circle cx="15.8" cy="15.7" r="15" fill="#1f4d22" opacity="0.55"/><circle cx="15.8" cy="15.7" r="14.4" fill="#4caf50"/><path d="M13.3 8.3 L18.3 8.3 L18.3 13.2 L23.2 13.2 L23.2 18.2 L18.3 18.2 L18.3 23.1 L13.3 23.1 L13.3 18.2 L8.4 18.2 L8.4 13.2 L13.3 13.2Z" fill="#f3fbef"/></svg>
<div class="t bl" id="l4" style="left:551.5px;top:426.9px;transform:scaleX(0.905)">INPUT</div>
<!-- KASIR icon -->
<svg class="a" style="left:628px;top:416px" width="30" height="31" viewBox="0 0 30 31"><rect x="1.5" y="5.6" width="23.6" height="23.6" fill="#bbdefb"/><path d="M14 14.5 L22 6.4 L19.6 4 L27.6 2.2 L26 10.4 L24 8.4 L17 17.5Z" fill="#3f51b5"/><path d="M15.5 16 L24.5 6" stroke="#3f51b5" stroke-width="4.6"/><path d="M19 2.4 L27.8 2 L27.4 11Z" fill="#3f51b5"/></svg>
<div class="t bl" id="l5" style="left:663.5px;top:426.9px;transform:scaleX(0.92)">KASIR</div>
<!-- LAPORAN icon -->
<svg class="a" style="left:728px;top:416px" width="30" height="31" viewBox="0 0 30 31"><path d="M1 11 Q1 9 3 9 L8 9 L8 29.6 L3.6 29.6 Q1 29.6 1 27Z" fill="#f4511e"/><path d="M6.8 1.8 L28 1.8 L28 27.4 Q28 29.8 25.6 29.8 L4 29.8 Q6.8 29.4 6.8 27Z" fill="#ffccbc"/><rect x="11.2" y="5.6" width="12.6" height="2.6" fill="#f4623a"/><g fill="#f4623a"><rect x="11.2" y="10.6" width="5.4" height="1.7"/><rect x="18.4" y="10.6" width="5.4" height="1.7"/><rect x="11.2" y="13.6" width="5.4" height="1.7"/><rect x="18.4" y="13.6" width="5.4" height="1.7"/><rect x="11.2" y="16.6" width="5.4" height="1.7"/><rect x="18.4" y="16.6" width="5.4" height="1.7"/><rect x="11.2" y="19.6" width="5.4" height="1.7"/><rect x="18.4" y="19.6" width="5.4" height="1.7"/><rect x="11.2" y="22.6" width="5.4" height="1.7"/><rect x="18.4" y="22.6" width="5.4" height="1.7"/><rect x="11.2" y="25.4" width="5.4" height="1.5"/><rect x="18.4" y="25.4" width="5.4" height="1.5"/></g></svg>
<div class="t bl" id="l6" style="left:763.2px;top:428.2px;font-size:8.2px;transform:scaleX(0.965)">LAPORAN</div>

<!-- TASKBAR -->
<div class="a" style="left:0;top:534px;width:1000px;height:29px;background:#111111"></div>
<svg class="a" style="left:11px;top:541.5px" width="14" height="14" viewBox="0 0 14 14"><path d="M0.5 2.2 L6 1.4 L6 6.5 L0.5 6.5Z M6.8 1.3 L13.5 0.3 L13.5 6.5 L6.8 6.5Z M0.5 7.3 L6 7.3 L6 12.4 L0.5 11.6Z M6.8 7.3 L13.5 7.3 L13.5 13.5 L6.8 12.5Z" fill="#fff"/></svg>
<svg class="a" style="left:45px;top:541px" width="15" height="15" viewBox="0 0 15 15"><circle cx="9.5" cy="5.5" r="4" fill="none" stroke="#fff" stroke-width="1.1"/><path d="M6.6 8.4 L1.5 13.5" stroke="#fff" stroke-width="1.2"/></svg>
<svg class="a" style="left:81.5px;top:541px" width="17" height="14" viewBox="0 0 17 14"><path d="M0.5 1 L6 1 L7.5 2.5 L16.5 2.5 L16.5 13.5 L0.5 13.5Z" fill="#f2cf5f"/><path d="M0.5 4.5 L16.5 4.5 L16.5 13.5 L0.5 13.5Z" fill="#fbe08a"/><rect x="4" y="8" width="9" height="5.5" fill="#3f9fd8"/><rect x="6" y="10.3" width="5" height="3.2" fill="#fbe08a"/></svg>
<svg class="a" style="left:117.5px;top:539.5px" width="17" height="17" viewBox="0 0 17 17"><circle cx="8.5" cy="8.5" r="8.2" fill="#dd4b3e"/><path d="M8.5 8.5 L1.4 4.4 A8.2 8.2 0 0 0 8.5 16.7 L12.6 9.6Z" fill="#2da44f"/><path d="M8.5 8.5 L8.5 16.7 A8.2 8.2 0 0 0 15.6 4.4 L8.5 4.4Z" fill="#f8c92e"/><path d="M1.4 4.4 A8.2 8.2 0 0 1 15.6 4.4 L8.5 4.4 L5 8.5Z" fill="#dd4b3e"/><circle cx="8.5" cy="8.5" r="3.9" fill="#fff"/><circle cx="8.5" cy="8.5" r="3" fill="#4a8af0"/></svg>
<svg class="a" style="left:153.5px;top:540px" width="16" height="17" viewBox="0 0 16 17"><path d="M8 0.5 L15.3 4 L15.3 12.5 L8 16.5 L0.7 12.5 L0.7 4Z" fill="#8fa9d1"/><path d="M0.7 4 L8 7.3 L15.3 4 L8 0.5Z" fill="#dbe6f4"/><path d="M8 7.3 L8 16.5 L15.3 12.5 L15.3 4Z" fill="#6f8fbf"/><path d="M8 7.3 L8 16.5 L0.7 12.5 L0.7 4Z" fill="#a9c0e0"/></svg>
<div class="a" style="left:180px;top:534px;width:35px;height:29px;background:#343434"></div>
<svg class="a" style="left:188.5px;top:539.5px" width="18" height="18" viewBox="0 0 18 18"><rect x="0.5" y="0.5" width="17" height="17" rx="2" fill="#eef1f4" stroke="#c5cad0" stroke-width="0.6"/><path d="M3 10 L15 10 L15 15 L3 15Z" fill="#b9cbe2"/><path d="M9 3 C7 5.5 10.5 6.5 8.5 9.5" stroke="#e0762a" stroke-width="1.6" fill="none"/><path d="M5 11.5 C7 12.5 11 12.5 13 11.5 M5.5 13.5 C7.5 14.3 10.5 14.3 12.5 13.5" stroke="#4d74a8" stroke-width="1" fill="none"/></svg>
<div class="a" style="left:75px;top:561.5px;width:30px;height:1.5px;background:#bdbdbd"></div>
<div class="a" style="left:111px;top:561.5px;width:30px;height:1.5px;background:#bdbdbd"></div>
<div class="a" style="left:147px;top:561.5px;width:30px;height:1.5px;background:#bdbdbd"></div>
<div class="a" style="left:180px;top:561.5px;width:35px;height:1.5px;background:#c8c8c8"></div>
<!-- tray -->
<svg class="a" style="left:799.5px;top:545px" width="10" height="7" viewBox="0 0 10 7"><path d="M0.8 5.8 L5 1.4 L9.2 5.8" stroke="#fff" stroke-width="1.1" fill="none"/></svg>
<svg class="a" style="left:816px;top:543px" width="12" height="12" viewBox="0 0 12 12"><rect x="0" y="0" width="12" height="12" rx="1.5" fill="#f08a3c"/><path d="M3 3 C5 4.5 7 4.5 9 3 C8 5 8 7 9 9 C7 7.5 5 7.5 3 9 C4 7 4 5 3 3Z" fill="none" stroke="#fff" stroke-width="1.2"/></svg>
<svg class="a" style="left:835.5px;top:543.5px" width="12" height="11" viewBox="0 0 12 11"><path d="M1.5 10 A9 9 0 0 1 10.5 1" stroke="#ddd" stroke-width="0.9" fill="none"/><path d="M4 10 A6.5 6.5 0 0 1 10.5 3.5" stroke="#ddd" stroke-width="0.9" fill="none"/><path d="M6.5 10 A4 4 0 0 1 10.5 6" stroke="#ddd" stroke-width="0.9" fill="none"/><circle cx="9.7" cy="9.3" r="1.2" fill="#fff"/></svg>
<svg class="a" style="left:850.5px;top:543.5px" width="14" height="11" viewBox="0 0 14 11"><rect x="3" y="3.5" width="10" height="5.5" fill="#fff" stroke="#fff" stroke-width="0.5"/><rect x="4" y="4.5" width="8" height="3.5" fill="#ddd"/><rect x="13" y="5" width="1" height="2.5" fill="#fff"/><circle cx="2.5" cy="2.5" r="1.8" fill="none" stroke="#fff" stroke-width="0.9"/><path d="M2.5 4 L2.5 7" stroke="#fff" stroke-width="0.9"/></svg>
<svg class="a" style="left:868px;top:543px" width="13" height="12" viewBox="0 0 13 12"><path d="M0.8 4.2 L3 4.2 L5.8 1.5 L5.8 10.5 L3 7.8 L0.8 7.8Z" fill="none" stroke="#fff" stroke-width="0.9"/><path d="M7.5 4 C8.4 5.2 8.4 6.8 7.5 8" stroke="#ddd" stroke-width="0.8" fill="none"/><path d="M9.3 2.6 C10.8 4.6 10.8 7.4 9.3 9.4" stroke="#aaa" stroke-width="0.8" fill="none"/><path d="M11 1.3 C13 4 13 8 11 10.7" stroke="#777" stroke-width="0.8" fill="none"/></svg>
<div class="t" style="left:888.2px;top:543.8px;font-size:8.8px;color:#f0f0f0;transform-origin:0 0;transform:scaleX(0.88)">ENG</div>
<div class="t" style="left:914.8px;top:536.8px;width:40px;text-align:center;font-size:8.8px;color:#f0f0f0;transform:scaleX(0.92)">23:41</div>
<div class="t" style="left:910.6px;top:550.1px;width:50px;text-align:center;font-size:8.8px;color:#f0f0f0;transform:scaleX(0.93)">13/04/2021</div>
<svg class="a" style="left:969.5px;top:542.5px" width="13" height="13" viewBox="0 0 13 13"><path d="M0.8 0.8 L12.2 0.8 L12.2 9.2 L8.3 9.2 L6.5 11.6 L4.7 9.2 L0.8 9.2Z" fill="none" stroke="#fff" stroke-width="1"/></svg>
<div class="a" style="left:996.5px;top:534px;width:1px;height:29px;background:#4a4a4a"></div>

</div>
</body></html>
